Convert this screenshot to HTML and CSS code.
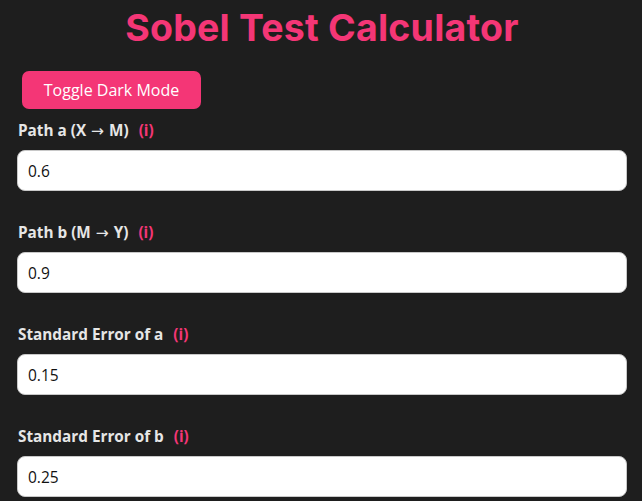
FILE: index.html
```html
<!DOCTYPE html>
<html>
<head>
<meta charset="utf-8">
<link rel="stylesheet" href="styles.css">
</head>
<body>
<div class="page">
  <h1 class="title">Sobel Test Calculator</h1>
  <button class="toggle">Toggle Dark Mode</button>
  <div class="field">
    <label class="label">Path a (X <span class="arrow">→</span> M) <span class="info">(i)</span></label>
    <input class="input" type="text" value="0.6">
  </div>
  <div class="field">
    <label class="label">Path b (M <span class="arrow">→</span> Y) <span class="info">(i)</span></label>
    <input class="input" type="text" value="0.9">
  </div>
  <div class="field">
    <label class="label">Standard Error of a <span class="info">(i)</span></label>
    <input class="input" type="text" value="0.15">
  </div>
  <div class="field">
    <label class="label">Standard Error of b <span class="info">(i)</span></label>
    <input class="input" type="text" value="0.25">
  </div>
</div>
</body>
</html>
```
FILE: styles.css
```css
html, body {
  margin: 0;
  padding: 0;
  background: #1e1e1e;
  overflow: hidden;
}
.page {
  padding: 0 15px 0 17px;
  font-family: "Open Sans", "Liberation Sans", sans-serif;
  color: #e6e6e6;
}
.title {
  margin: 0;
  padding-top: 7px;
  height: 51px;
  text-align: center;
  font-family: Inter, "Liberation Sans", sans-serif;
  font-weight: 700;
  font-size: 37.5px;
  line-height: 42px;
  color: #f43676;
  letter-spacing: 0.2px;
}
.toggle {
  display: block;
  margin: 13px 0 0 5px;
  width: 179px;
  height: 38px;
  border: none;
  border-radius: 7px;
  background: #f43676;
  color: #ffffff;
  font-family: "Open Sans", "Liberation Sans", sans-serif;
  font-size: 16px;
  padding: 0;
}
.field {
  display: flex;
  flex-direction: column;
  margin-top: 10px;
}
.field + .field {
  margin-top: 30px;
}
.label {
  font-weight: 700;
  font-size: 15.3px;
  line-height: 22px;
  height: 22px;
  margin-left: 1px;
}
.arrow {
  font-family: "DejaVu Sans", sans-serif;
  font-weight: 400;
  font-size: 15.5px;
  line-height: 1;
  margin: 0 1px;
}
.info {
  color: #f43676;
  margin-left: 6px;
}
.input {
  margin-top: 9px;
  box-sizing: border-box;
  width: 100%;
  height: 41px;
  border: 1px solid #c8c8c8;
  border-radius: 8px;
  background: #ffffff;
  padding: 0 10px;
  font-family: "Open Sans", "Liberation Sans", sans-serif;
  font-size: 15.5px;
  color: #111;
  outline: none;
}
```
